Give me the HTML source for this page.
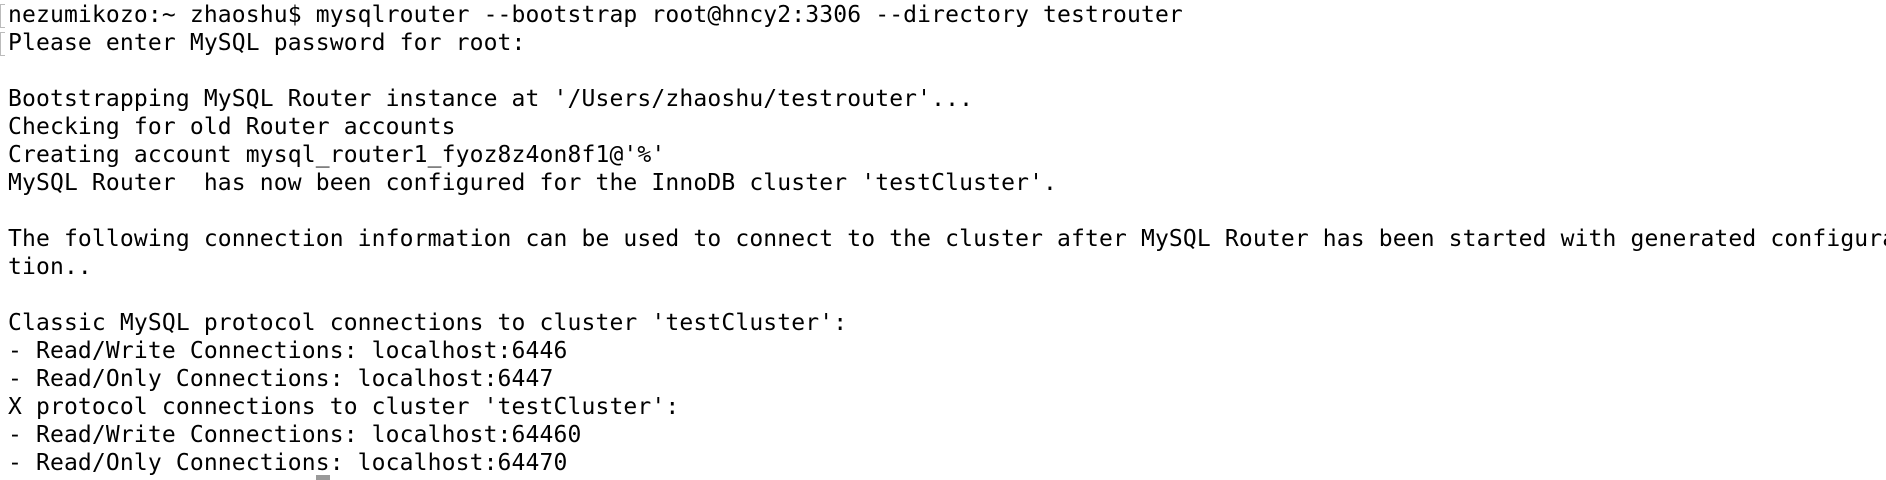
<!DOCTYPE html>
<html><head><meta charset="utf-8"><style>
html,body{margin:0;padding:0;background:#fff;width:1886px;height:480px;overflow:hidden}
pre{margin:0;position:absolute;left:8px;top:1px;font-family:"DejaVu Sans Mono","Liberation Mono",monospace;font-size:23px;letter-spacing:0.14px;line-height:28px;color:#000;white-space:pre}
.br{position:absolute;left:0;width:4px;height:22px;border:1px solid #bbb;border-right:none}
.cur{position:absolute;left:316px;top:475px;width:14px;height:5px;background:#999}
</style></head><body>
<div class="br" style="top:4px"></div><div class="br" style="top:32px"></div>
<pre>nezumikozo:~ zhaoshu$ mysqlrouter --bootstrap root@hncy2:3306 --directory testrouter
Please enter MySQL password for root:

Bootstrapping MySQL Router instance at '/Users/zhaoshu/testrouter'...
Checking for old Router accounts
Creating account mysql_router1_fyoz8z4on8f1@'%'
MySQL Router  has now been configured for the InnoDB cluster 'testCluster'.

The following connection information can be used to connect to the cluster after MySQL Router has been started with generated configura
tion..

Classic MySQL protocol connections to cluster 'testCluster':
- Read/Write Connections: localhost:6446
- Read/Only Connections: localhost:6447
X protocol connections to cluster 'testCluster':
- Read/Write Connections: localhost:64460
- Read/Only Connections: localhost:64470</pre>
<div class="cur"></div>
</body></html>
